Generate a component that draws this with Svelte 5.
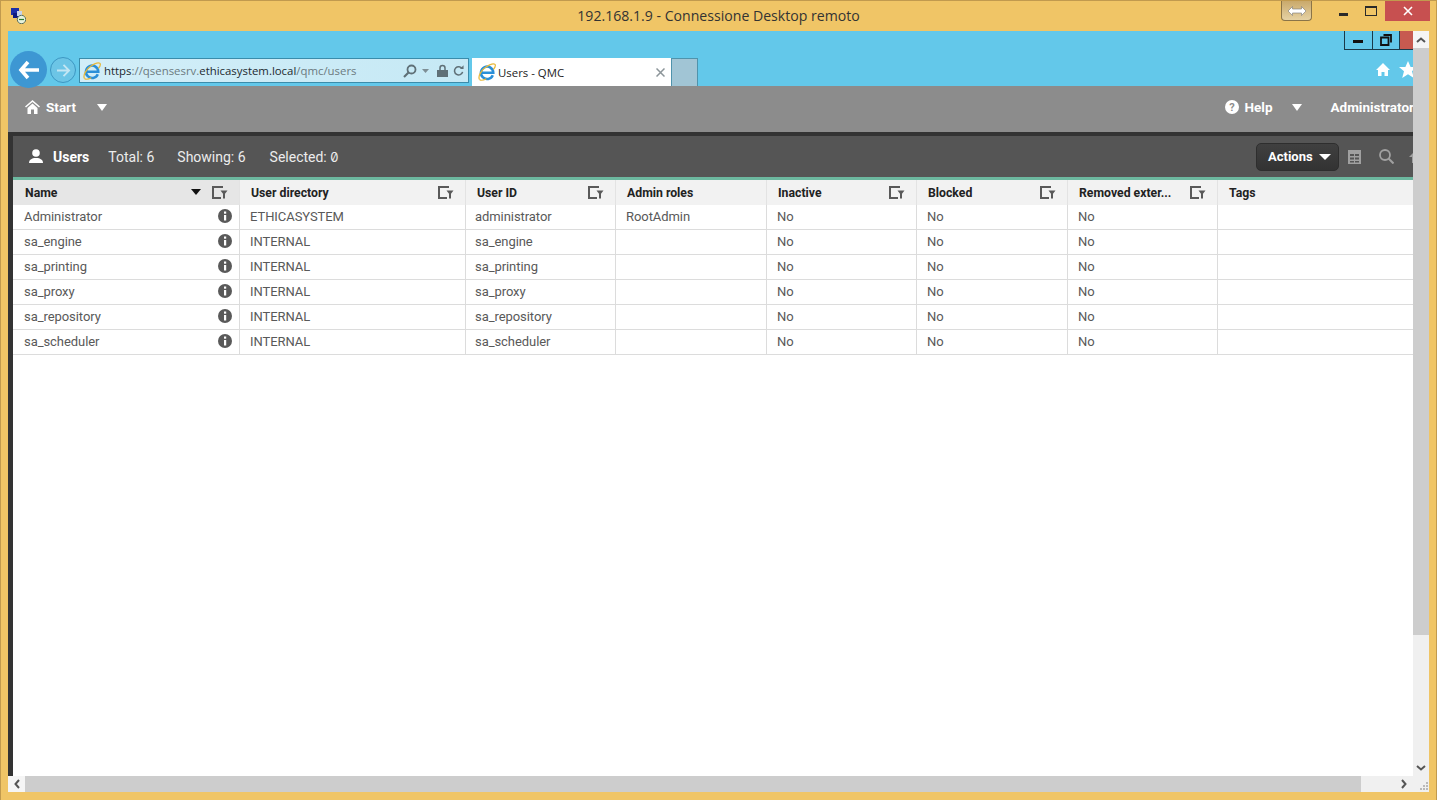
<script>
  const columns = [
    { label: 'Name', width: 227, filter: true, sort: true, active: true },
    { label: 'User directory', width: 226, filter: true },
    { label: 'User ID', width: 150, filter: true },
    { label: 'Admin roles', width: 151, filter: false },
    { label: 'Inactive', width: 150, filter: true },
    { label: 'Blocked', width: 151, filter: true },
    { label: 'Removed exter...', width: 150, filter: true },
    { label: 'Tags', width: 195, filter: false }
  ];
  const rows = [
    ['Administrator', 'ETHICASYSTEM', 'administrator', 'RootAdmin', 'No', 'No', 'No', ''],
    ['sa_engine', 'INTERNAL', 'sa_engine', '', 'No', 'No', 'No', ''],
    ['sa_printing', 'INTERNAL', 'sa_printing', '', 'No', 'No', 'No', ''],
    ['sa_proxy', 'INTERNAL', 'sa_proxy', '', 'No', 'No', 'No', ''],
    ['sa_repository', 'INTERNAL', 'sa_repository', '', 'No', 'No', 'No', ''],
    ['sa_scheduler', 'INTERNAL', 'sa_scheduler', '', 'No', 'No', 'No', '']
  ];
  const gridCols = columns.map((c) => c.width + 'px').join(' ');
</script>

{#snippet ieLogo()}
  <svg class="ie" viewBox="0 0 18 18" width="18" height="18">
    <path d="M14.800 12.300A6.200 6.200 0 1 1 15.300 9.700H4" fill="none" stroke="#2a8fd8" stroke-width="2.500"/>
    <path d="M1.500 16.500C-.5 13 4 6.500 8 4c4-2.700 7.800-3.800 9-2.600 .9 1-.2 3.200-1.500 5" fill="none" stroke="#e8b93a" stroke-width="1.300"/>
    <path d="M1.500 16.500c1.500 1.200 4.500.5 6.800-.8" fill="none" stroke="#e8b93a" stroke-width="1.200"/>
  </svg>
{/snippet}

{#snippet filterIcon()}
  <svg class="filter" viewBox="0 0 16 13" width="16" height="13">
    <path d="M9 1H1v11h8M1 1h10" fill="none" stroke="#595959" stroke-width="2"/>
    <path d="M8.500 4.500h7l-2.500 3.200V12.500h-2V7.700z" fill="#595959"/>
  </svg>
{/snippet}

<div class="window">
  <header class="titlebar">
    <svg class="rdp" viewBox="0 0 16 16" width="16" height="16">
      <rect x="1" y="0" width="8" height="7" fill="#1c2fa8"/>
      <rect x="3" y="5" width="7" height="5" fill="#0d1a80"/>
      <rect x="7" y="3" width="5" height="5" fill="#c9d3ea"/>
      <circle cx="11.500" cy="11.500" r="4.200" fill="#e8f2dc" stroke="#5c6f5c"/>
      <path d="M9 11.500h5" stroke="#2c7a2c" stroke-width="1.200"/>
    </svg>
    <div class="title">192.168.1.9 - Connessione Desktop remoto</div>
    <div class="conn">
      <svg viewBox="0 0 18 10" width="18" height="10"><path d="M0 5l4.500-4.500V3h9V.5L18 5l-4.500 4.500V7h-9v2.500z" fill="#fff" stroke="#777" stroke-width=".6"/></svg>
    </div>
    <div class="wbtn"><span class="min"></span></div>
    <div class="wbtn"><span class="max"></span></div>
    <div class="wbtn close"><svg viewBox="0 0 10 10" width="10" height="10"><path d="M1 1l8 8M9 1l-8 8" stroke="#fff" stroke-width="1.600"/></svg></div>
  </header>

  <div class="client">
    <div class="viewport">
      <div class="ie-chrome">
        <div class="inner-ctrl">
          <div class="ictl"><span class="imin"></span></div>
          <div class="ictl">
            <svg viewBox="0 0 12 12" width="12" height="12"><path d="M3.500 1h7.500v7.500M1 3.500h7.500V11H1z" fill="none" stroke="#111" stroke-width="1.800"/></svg>
          </div>
          <div class="ictl red"></div>
        </div>
        <div class="ie-row">
          <div class="back">
            <svg viewBox="0 0 22 20" width="22" height="20"><path d="M10 2L3 10l7 8M3.500 10H21" fill="none" stroke="#fff" stroke-width="3.600"/></svg>
          </div>
          <div class="fwd">
            <svg viewBox="0 0 16 14" width="15" height="13"><path d="M8 1l6 6-6 6M14 7H1" fill="none" stroke="#c4e6f3" stroke-width="2"/></svg>
          </div>
          <div class="address">
            {@render ieLogo()}
            <span class="url"><b>https</b>://qsensesrv.<b>ethicasystem.local</b>/qmc/users</span>
            <span class="addr-tools">
              <svg viewBox="0 0 14 14" width="14" height="14"><circle cx="8.500" cy="5.500" r="4" fill="none" stroke="#5f7077" stroke-width="1.800"/><path d="M5.500 8.500L1 13" stroke="#5f7077" stroke-width="2.200"/></svg>
              <svg viewBox="0 0 7 4" width="7" height="4"><path d="M0 0h7L3.500 4z" fill="#7d8e95"/></svg>
              <svg class="lock" viewBox="0 0 11 13" width="11" height="13"><path d="M3 6V4a2.500 2.500 0 0 1 5 0v2" fill="none" stroke="#5f7077" stroke-width="1.500"/><rect y="6" width="11" height="7" fill="#5f7077"/></svg>
              <svg viewBox="0 0 12 13" width="11" height="13"><path d="M10 4.500A4.500 4.500 0 1 0 10.500 8" fill="none" stroke="#5f7077" stroke-width="1.700"/><path d="M7.500 4.800h4V.800z" fill="#5f7077"/></svg>
            </span>
          </div>
          <div class="tab">
            {@render ieLogo()}
            <span class="tab-label">Users - QMC</span>
            <svg class="tab-x" viewBox="0 0 9 9" width="9" height="9"><path d="M.5.500l8 8M8.500.500l-8 8" stroke="#8c9599" stroke-width="1.500"/></svg>
          </div>
          <div class="newtab"></div>
          <div class="ie-tools">
            <svg viewBox="0 0 16 15" width="16" height="15"><path d="M8 1L1 8h2v6h3.500v-4h3v4H13V8h2z" fill="#fff"/></svg>
            <svg viewBox="0 0 18 17" width="18" height="17"><path d="M9 0l2.600 6H18l-5 4.200L14.800 17 9 13.200 3.200 17 5 10.200 0 6h6.400z" fill="#fff"/></svg>
          </div>
        </div>
      </div>

      <nav class="nav">
        <svg class="navi" viewBox="0 0 15 14" width="15" height="14"><path d="M7.500 0L0 6.500l1 1 6.500-5.600L14 7.500l1-1zM2.500 8v6h3.500V9.500h3V14h3.500V8L7.500 3.500z" fill="#fff"/></svg>
        <span class="nav-text start">Start</span>
        <span class="tri nav-tri-start"></span>
        <div class="nav-right">
          <svg viewBox="0 0 14 14" width="14" height="14"><circle cx="7" cy="7" r="7" fill="#fff"/><text x="7" y="11" text-anchor="middle" font-size="11" font-weight="700" font-family="Roboto" fill="#8c8c8c">?</text></svg>
          <span class="nav-text help">Help</span>
          <span class="tri"></span>
          <span class="nav-text admin">Administrator</span>
        </div>
      </nav>

      <div class="work">
        <div class="subhead">
          <svg class="usr" viewBox="0 0 14 14" width="14" height="14"><circle cx="7" cy="4" r="3.800" fill="#fff"/><path d="M0 14c0-3.500 3-4.500 5-5h4c2 .5 5 1.500 5 5z" fill="#fff"/></svg>
          <span class="users">Users</span>
          <span class="stat s1">Total: 6</span>
          <span class="stat s2">Showing: 6</span>
          <span class="stat s3">Selected: <span class="zero">0</span></span>
          <div class="sub-right">
            <button class="actions">Actions <span class="tri small"></span></button>
            <svg class="sub-ic" viewBox="0 0 13 14" width="13" height="14"><path d="M0 0h13v14H0zM2 4v2h4V4zm5 0v2h4V4zM2 7.500v2h4v-2zm5 0v2h4v-2zM2 11v1.500h4V11zm5 0v1.500h4V11z" fill="#a0a0a0" fill-rule="evenodd"/></svg>
            <svg class="sub-ic search" viewBox="0 0 15 15" width="15" height="15"><circle cx="6" cy="6" r="5" fill="none" stroke="#a0a0a0" stroke-width="1.800"/><path d="M9.500 9.500L14.500 14.500" stroke="#a0a0a0" stroke-width="2"/></svg>
            <svg class="sub-ic last" viewBox="0 0 12 12" width="12" height="12"><path d="M6 0L0 6h3v6h6V6h3z" fill="#a0a0a0"/></svg>
          </div>
        </div>
        <div class="accent"></div>
        <div class="table">
          <div class="row head" style="grid-template-columns:{gridCols}">
            {#each columns as col}
              <div class="cell hcell" class:active={col.active}>
                <span class="hlabel">{col.label}</span>
                {#if col.sort}<span class="sort"></span>{/if}
                {#if col.filter}{@render filterIcon()}{/if}
              </div>
            {/each}
          </div>
          {#each rows as row}
            <div class="row body" style="grid-template-columns:{gridCols}">
              {#each row as value, i}
                <div class="cell">
                  <span class="val">{value}</span>
                  {#if i === 0}
                    <svg class="info" viewBox="0 0 14 14" width="14" height="14"><circle cx="7" cy="7" r="7" fill="#595959"/><rect x="6" y="2.500" width="2.200" height="2.200" fill="#fff"/><rect x="6" y="6" width="2.200" height="5.500" fill="#fff"/></svg>
                  {/if}
                </div>
              {/each}
            </div>
          {/each}
        </div>
      </div>
    </div>

    <div class="vscroll">
      <div class="varrow top"><svg viewBox="0 0 10 6" width="10" height="6"><path d="M1 5l4-3.500L9 5" fill="none" stroke="#555" stroke-width="2"/></svg></div>
      <div class="vthumb"></div>
      <div class="varrow bottom"><svg viewBox="0 0 10 6" width="10" height="6"><path d="M1 1l4 3.500L9 1" fill="none" stroke="#555" stroke-width="2"/></svg></div>
    </div>
  </div>

  <div class="hscroll">
    <div class="harrow left"><svg viewBox="0 0 6 10" width="6" height="10"><path d="M5 1L1.500 5 5 9" fill="none" stroke="#555" stroke-width="2"/></svg></div>
    <div class="hthumb"></div>
    <div class="harrow right"><svg viewBox="0 0 6 10" width="6" height="10"><path d="M1 1l3.500 4L1 9" fill="none" stroke="#555" stroke-width="2"/></svg></div>
    <div class="corner">
      <svg viewBox="0 0 9 9" width="9" height="9"><path d="M6 0h2v2H6zM3 3h2v2H3zM6 3h2v2H6zM0 6h2v2H0zM3 6h2v2H3zM6 6h2v2H6z" fill="#b9b9b9"/></svg>
    </div>
  </div>
</div>

<style>
  :global(body) { margin: 0; background: #f0c566; }
  .window {
    width: 1437px; height: 800px; box-sizing: border-box; overflow: hidden;
    background: #f0c566; border: 1px solid #c19a4e; border-bottom: 0;
    padding: 0 7px 8px 7px; display: flex; flex-direction: column;
    font-family: Roboto, "Liberation Sans", sans-serif;
  }
  .titlebar { height: 30px; display: flex; align-items: flex-start; position: relative; flex: none; }
  .rdp { margin: 7px 0 0 2px; flex: none; }
  .title { position: absolute; left: 0; right: 0; top: 6px; text-align: center; font: 14.100px/18px "Open Sans", sans-serif; color: #333; }
  .conn {
    position: relative; margin-left: auto; width: 31px; height: 20px; box-sizing: border-box;
    border: 1px solid #8a7448; border-top: 0; border-radius: 0 0 4px 4px;
    background: linear-gradient(#c9a96b, #e6d2a4); display: flex; align-items: center; justify-content: center;
  }
  .wbtn { position: relative; width: 28px; height: 20px; margin-left: 0; display: flex; align-items: center; justify-content: center; }
  .wbtn:nth-of-type(3) { margin-left: 17px; }
  .close { width: 45px; background: #c75050; margin-left: 0; margin-right: -1px; }
  .min { width: 9px; height: 3px; background: #2a2a2a; margin-top: 7px; }
  .max { width: 10px; height: 7px; border: 1px solid #2a2a2a; border-top-width: 2px; }

  .client { flex: 1; display: flex; min-height: 0; }
  .viewport { width: 1405px; flex: none; display: flex; flex-direction: column; overflow: hidden; background: #fff; }

  .ie-chrome { height: 55px; flex: none; background: #63c8ea; position: relative; }
  .inner-ctrl { position: absolute; right: 0; top: 0; display: flex; height: 19px; border-left: 1px solid #1a3a4a; border-bottom: 1px solid #1a3a4a; box-sizing: border-box; }
  .ictl { width: 26.500px; display: flex; align-items: center; justify-content: center; border-right: 1px solid #1a3a4a; }
  .ictl.red { width: 13px; background: #c75a50; border: 0; }
  .imin { width: 10px; height: 3px; background: #111; margin-top: 2px; }
  .ie-row { position: absolute; left: 0; right: 0; top: 20px; height: 35px; display: flex; align-items: flex-start; }
  .back { width: 37px; height: 37px; margin-left: 2px; border-radius: 50%; background: #3d97d3; display: flex; align-items: center; justify-content: center; flex: none; }
  .fwd { width: 24px; height: 24px; margin: 6px 0 0 3px; border-radius: 50%; border: 1px solid #3d97c3; background: #6cc5e6; display: flex; align-items: center; justify-content: center; flex: none; }
  .address { width: 390px; height: 25px; box-sizing: border-box; margin: 7px 0 0 3px; border: 1px solid #3a8cab; background: linear-gradient(90deg,#d2eef8,#c6e9f5); display: flex; align-items: center; padding-left: 3px; flex: none; }
  .url { margin-left: 3px; font: 11.400px "Open Sans", sans-serif; color: #6c7a80; white-space: nowrap; }
  .url b { font-weight: 400; color: #1d2a30; }
  .addr-tools { margin-left: auto; margin-right: 4px; display: flex; align-items: center; gap: 5px; }
  .lock { margin-left: 3px; }
  .tab { width: 199px; height: 28px; box-sizing: border-box; margin: 7px 0 0 3px; background: #fff; display: flex; align-items: center; padding: 0 6px; flex: none; }
  .tab-label { margin-left: 2px; font: 11.400px "Open Sans", sans-serif; color: #222; }
  .tab-x { margin-left: auto; margin-right: 0; }
  .newtab { width: 27px; height: 28px; box-sizing: border-box; margin-top: 7px; background: #a1c5d5; border: 1px solid #4f93ac; border-bottom: 0; flex: none; }
  .ie-tools { margin-left: auto; margin-right: -4px; margin-top: 10px; display: flex; align-items: center; gap: 8px; }

  .nav { height: 46px; flex: none; background: #8c8c8c; display: flex; align-items: center; color: #fff; padding-bottom: 4px; box-sizing: border-box; }
  .navi { margin-left: 17px; margin-bottom: 1px; }
  .nav-text { font-weight: 700; font-size: 13.500px; color: #fff; }
  .start { margin-left: 6px; }
  .tri { width: 0; height: 0; border-left: 5.500px solid transparent; border-right: 5.500px solid transparent; border-top: 7px solid #fff; flex: none; }
  .nav-tri-start { margin-left: 21px; }
  .nav-right { margin-left: auto; margin-right: -1px; display: flex; align-items: center; white-space: nowrap; }
  .help { margin-left: 6px; }
  .nav-right .tri { margin-left: 19px; }
  .admin { margin-left: 29px; }

  .work { flex: 1; min-height: 0; border-left: 5px solid #333; border-top: 4px solid #333; background: #fff; box-sizing: border-box; display: flex; flex-direction: column; }
  .subhead { height: 41px; flex: none; background: #555; display: flex; align-items: center; color: #fff; font-size: 14px; }
  .usr { margin-left: 16px; margin-bottom: 2px; }
  .users { margin-left: 10px; font-weight: 700; }
  .stat { color: #ececec; white-space: nowrap; }
  .s1 { margin-left: 19px; }
  .s2 { margin-left: 23px; }
  .s3 { margin-left: 24px; }
  .zero { font-family: Inter, sans-serif; font-feature-settings: "zero"; font-size: 13px; }
  .sub-right { margin-left: auto; display: flex; align-items: center; margin-right: -8px; }
  .actions {
    width: 83px; height: 28px; padding: 0 0 0 11px; box-sizing: border-box; display: flex; align-items: center; gap: 6px;
    background: linear-gradient(#404040,#333); border: 1px solid #2e2e2e; border-radius: 5px; color: #fff;
    font: 700 13px Roboto, sans-serif;
  }
  .tri.small { border-left-width: 6px; border-right-width: 6px; border-top-width: 6px; }
  .sub-ic { margin-left: 9px; flex: none; }
  .sub-ic.search { margin-left: 18px; }
  .sub-ic.last { margin-left: 15px; }
  .accent { height: 3px; background: #6cb89f; flex: none; }

  .table { font-size: 13px; }
  .row { display: grid; height: 25px; box-sizing: border-box; border-bottom: 1px solid #dcdcdc; color: #595959; }
  .row.head { background: #f2f2f2; border-bottom: 0; color: #222; }
  .cell { display: flex; align-items: center; border-right: 1px solid #dcdcdc; padding: 0 7px 0 10px; min-width: 0; box-sizing: border-box; white-space: nowrap; }
  .cell:last-child { border-right: 0; }
  .body .cell { padding-bottom: 2px; }
  .body .cell:first-child { padding-left: 11px; }
  .body .cell:nth-child(3) { padding-left: 9px; }
  .val { flex: 1; letter-spacing: -.005em; }
  .hcell { padding-left: 11px; padding-right: 11px; border-right-color: #e3e3e3; }
  .hcell:first-child { padding-left: 12px; }
  .hcell.active { background: #e6e6e6; }
  .hlabel { flex: 1; font-weight: 700; color: #222; font-size: 12.250px; }
  .sort { width: 0; height: 0; border-left: 5.500px solid transparent; border-right: 5.500px solid transparent; border-top: 6px solid #111; margin-right: 11px; margin-top: -2px; }
  .filter { flex: none; }
  .info { flex: none; }

  .vscroll { width: 16px; flex: none; background: #f0f0f0; display: flex; flex-direction: column; }
  .varrow { height: 17px; display: flex; align-items: center; justify-content: center; flex: none; }
  .varrow.top { background: #f5f5f5; }
  .vthumb { height: 587px; background: #cdcdcd; flex: none; }
  .varrow.bottom { margin-top: auto; }

  .hscroll { height: 16px; flex: none; background: #f0f0f0; display: flex; }
  .harrow { width: 17px; display: flex; align-items: center; justify-content: center; flex: none; }
  .harrow.left { background: #f5f5f5; }
  .hthumb { width: 1336px; background: #cdcdcd; flex: none; }
  .harrow.right { margin-left: auto; width: 17px; margin-right: 1px; }
  .corner { width: 16px; display: flex; align-items: flex-end; justify-content: flex-end; flex: none; padding-bottom: 1px; box-sizing: border-box; }
</style>
